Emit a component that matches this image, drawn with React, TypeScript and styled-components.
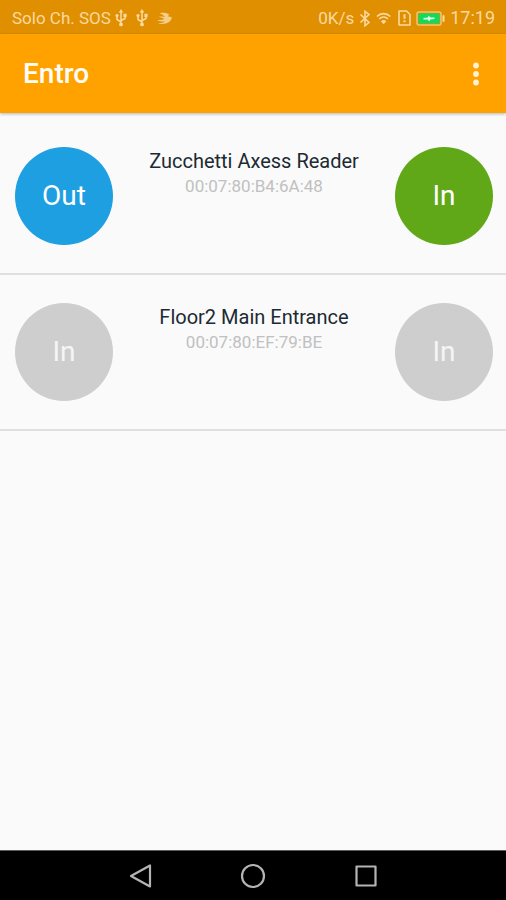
import React from "react";
import styled, { createGlobalStyle } from "styled-components";

const GlobalStyle = createGlobalStyle`
  *, *::before, *::after { box-sizing: border-box; }
  body {
    margin: 0;
    background: #fafafa;
    font-family: Roboto, "Liberation Sans", sans-serif;
  }
`;

const Screen = styled.div`
  display: flex;
  flex-direction: column;
  min-height: 100vh;
  background: #fafafa;
`;

const StatusBar = styled.div`
  display: flex;
  flex: none;
  align-items: center;
  justify-content: space-between;
  height: 34px;
  padding: 2px 11px 0 12px;
  background: #df8f00;
  color: #fbd9a0;
  font-size: 17px;
  line-height: 24px;
  white-space: nowrap;
`;

const StatusGroup = styled.div<{ $gap: number }>`
  display: flex;
  align-items: center;
  gap: ${({ $gap }) => $gap}px;

  svg { display: block; flex: none; }
`;

const Clock = styled.time`
  font-size: 18px;
`;

const AppBar = styled.header`
  display: flex;
  flex: none;
  align-items: center;
  justify-content: space-between;
  height: 79px;
  padding: 0 12px 0 23px;
  background: #ffa200;
  box-shadow: 0 1px 3px rgba(0, 0, 0, 0.28);
`;

const Title = styled.h1`
  margin: 0;
  color: #fffdf5;
  font-size: 28px;
  font-weight: 500;
  line-height: 32px;
`;

const MenuButton = styled.button`
  display: grid;
  place-items: center;
  width: 36px;
  height: 48px;
  padding: 0;
  border: 0;
  background: none;
  color: #fff1d6;
  cursor: pointer;
`;

const ReaderList = styled.ul`
  flex: 1;
  margin: 0;
  padding: 6px 0 0;
  list-style: none;
`;

const ReaderRow = styled.li`
  display: flex;
  align-items: flex-start;
  justify-content: space-between;
  padding: 28px 13px 28px 15px;
  border-bottom: 2px solid #e0e0e0;
`;

const tones = {
  blue: { fill: "#1e9fe2", text: "#ffffff" },
  green: { fill: "#60a817", text: "#ffffff" },
  idle: { fill: "#cecece", text: "#f5f5f5" },
};

type Tone = keyof typeof tones;

const PassButton = styled.button<{ $tone: Tone }>`
  flex: none;
  width: 98px;
  height: 98px;
  padding: 0;
  border: 0;
  border-radius: 50%;
  background: ${({ $tone }) => tones[$tone].fill};
  color: ${({ $tone }) => tones[$tone].text};
  font-family: inherit;
  font-size: 28px;
  line-height: 32px;
  cursor: pointer;

  &:disabled { cursor: default; }
`;

const ReaderInfo = styled.div`
  flex: 1;
  padding-top: 1px;
  text-align: center;
`;

const ReaderName = styled.h2`
  margin: 0;
  color: #1c2a33;
  font-size: 20px;
  font-weight: 400;
  line-height: 26px;
`;

const ReaderAddress = styled.p`
  margin: 0;
  color: #c0c0c0;
  font-size: 17px;
  line-height: 24px;
`;

const NavBar = styled.nav`
  display: flex;
  flex: none;
  align-items: center;
  justify-content: center;
  gap: 65px;
  height: 50px;
  border-top: 1px solid #5c5c5c;
  background: #000000;
`;

const NavButton = styled.button`
  display: grid;
  place-items: center;
  width: 48px;
  height: 48px;
  padding: 0;
  border: 0;
  background: none;
  color: #b4b4b4;
  cursor: pointer;
`;

const UsbIcon = () => (
  <svg width="12" height="18" viewBox="0 0 12 18" fill="none" stroke="currentColor" strokeWidth="1.5" aria-hidden="true">
    <path d="M6 3v12M6 13L2 10.500V7M6 11.500l4-2V6.500" />
    <path d="M6 0l2.300 3.600H3.700z" fill="currentColor" stroke="none" />
    <circle cx="6" cy="15.400" r="1.900" fill="currentColor" stroke="none" />
    <circle cx="2" cy="6.600" r="1.600" fill="currentColor" stroke="none" />
    <path d="M8.400 4.800h3.200V8H8.400z" fill="currentColor" stroke="none" />
  </svg>
);

const SwiftIcon = () => (
  <svg width="16" height="13" viewBox="0 0 16 13" fill="currentColor" fillOpacity="0.850" aria-hidden="true">
    <path d="M2.500 1.200C6 .5 10 .8 12.200 2.600L10.800 4.300 14.800 5.200C14.600 8 12.500 10.200 9.500 11.300 6.500 12.300 3.500 12.200 1 11.400c3 0 5.300-.6 7-1.900C5.300 9.900 2.500 9.300 0 8c3 .3 5.500 0 7.500-.9C5.500 5.600 3.700 5.100 1.600 4.900c2.200-.6 4.400-.5 6.400.1C6.600 3.100 4.600 1.900 2.500 1.200z" />
  </svg>
);

const BluetoothIcon = () => (
  <svg width="12" height="17" viewBox="0 0 12 17" fill="none" stroke="currentColor" strokeWidth="1.600" aria-hidden="true">
    <path d="M1.500 4.500l8.500 8-4 3.200V1.300l4 3.200-8.500 8" />
  </svg>
);

const WifiIcon = () => (
  <svg width="17" height="14" viewBox="0 0 19 15" fill="none" stroke="currentColor" strokeWidth="1.800" aria-hidden="true">
    <path d="M1 5.800c4.300-4.200 10.700-4.200 15 0M3.600 8.600c2.900-2.700 6.900-2.700 9.800 0" />
    <path d="M5.500 11c1.900-1.700 4.100-1.700 6 0l-3 3.500z" fill="currentColor" stroke="none" />
  </svg>
);

const SimAlertIcon = () => (
  <svg width="13" height="16" viewBox="0 0 13 16" fill="none" stroke="currentColor" strokeWidth="1.600" strokeLinejoin="round" aria-hidden="true">
    <path d="M1 1h7.500L12 4.500V15H1z" />
    <path d="M6.500 4.200v4.600M6.500 10.300v2" strokeWidth="2" />
  </svg>
);

const BatteryIcon = () => (
  <svg width="29" height="15" viewBox="0 0 29 15" aria-hidden="true">
    <rect x="1" y="1" width="24" height="13" rx="2" fill="none" stroke="currentColor" strokeOpacity="0.700" strokeWidth="1.500" />
    <rect x="2.500" y="2.500" width="21" height="10" fill="#0fdc5c" />
    <rect x="26.500" y="4" width="2" height="7" rx="1" fill="currentColor" />
    <path d="M7.500 7L12 6.600 12.600 4.600 14.400 6.500H18.500V8L14.200 8.400 13.400 10.400 11.700 8.400H7.500z" fill="#e9ffe9" />
  </svg>
);

const readers: {
  name: string;
  address: string;
  left: { label: string; tone: Tone };
  right: { label: string; tone: Tone };
}[] = [
  {
    name: "Zucchetti Axess Reader",
    address: "00:07:80:B4:6A:48",
    left: { label: "Out", tone: "blue" },
    right: { label: "In", tone: "green" },
  },
  {
    name: "Floor2 Main Entrance",
    address: "00:07:80:EF:79:BE",
    left: { label: "In", tone: "idle" },
    right: { label: "In", tone: "idle" },
  },
];

export default function App() {
  return (
    <Screen>
      <GlobalStyle />
      <StatusBar>
        <StatusGroup $gap={9}>
          <StatusGroup $gap={4}>
            <span>Solo Ch. SOS</span>
            <UsbIcon />
          </StatusGroup>
          <UsbIcon />
          <SwiftIcon />
        </StatusGroup>
        <StatusGroup $gap={5}>
          <span>0K/s</span>
          <BluetoothIcon />
          <WifiIcon />
          <SimAlertIcon />
          <BatteryIcon />
          <Clock>17:19</Clock>
        </StatusGroup>
      </StatusBar>
      <AppBar>
        <Title>Entro</Title>
        <MenuButton type="button" aria-label="More options">
          <svg width="6" height="24" viewBox="0 0 6 24" fill="currentColor" aria-hidden="true">
            <circle cx="3" cy="3.500" r="2.900" />
            <circle cx="3" cy="12" r="2.900" />
            <circle cx="3" cy="20.500" r="2.900" />
          </svg>
        </MenuButton>
      </AppBar>
      <ReaderList>
        {readers.map(({ name, address, left, right }) => (
          <ReaderRow key={address}>
            <PassButton type="button" $tone={left.tone} disabled={left.tone === "idle"}>
              {left.label}
            </PassButton>
            <ReaderInfo>
              <ReaderName>{name}</ReaderName>
              <ReaderAddress>{address}</ReaderAddress>
            </ReaderInfo>
            <PassButton type="button" $tone={right.tone} disabled={right.tone === "idle"}>
              {right.label}
            </PassButton>
          </ReaderRow>
        ))}
      </ReaderList>
      <NavBar aria-label="System">
        <NavButton type="button" aria-label="Back">
          <svg width="24" height="26" viewBox="0 0 24 26" fill="none" stroke="currentColor" strokeWidth="2.200" strokeLinejoin="round" aria-hidden="true">
            <path d="M22 2.500v21L3 13z" />
          </svg>
        </NavButton>
        <NavButton type="button" aria-label="Home">
          <svg width="26" height="26" viewBox="0 0 26 26" fill="none" stroke="currentColor" strokeWidth="2.200" aria-hidden="true">
            <circle cx="13" cy="13" r="11" />
          </svg>
        </NavButton>
        <NavButton type="button" aria-label="Recent apps">
          <svg width="24" height="24" viewBox="0 0 24 24" fill="none" stroke="currentColor" strokeWidth="2.200" strokeLinejoin="round" aria-hidden="true">
            <rect x="2.500" y="2.500" width="19" height="19" />
          </svg>
        </NavButton>
      </NavBar>
    </Screen>
  );
}
